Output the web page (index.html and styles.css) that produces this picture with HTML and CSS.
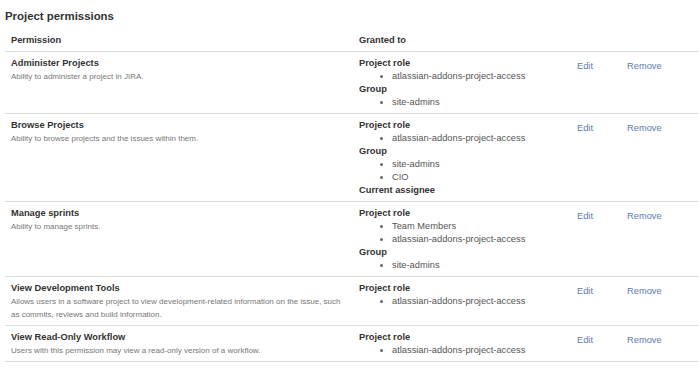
FILE: index.html
```html
<!DOCTYPE html>
<html lang="en">
<head>
    <meta charset="UTF-8">
    <title>Project permissions</title>
    <link rel="stylesheet" href="styles.css">
</head>
<body>
    <div class="page">
        <h2 class="page-title">Project permissions</h2>

        <div class="perm-table">
            <div class="perm-row perm-head">
                <div class="cell">Permission</div>
                <div class="cell">Granted to</div>
                <div class="cell"></div>
                <div class="cell"></div>
            </div>

            <div class="perm-row">
                <div class="cell perm-info">
                    <div class="perm-name">Administer Projects</div>
                    <div class="perm-desc">Ability to administer a project in JIRA.</div>
                </div>
                <div class="cell grants">
                    <div class="grant-type">Project role</div>
                    <ul>
                        <li>atlassian-addons-project-access</li>
                    </ul>
                    <div class="grant-type">Group</div>
                    <ul>
                        <li>site-admins</li>
                    </ul>
                </div>
                <div class="cell action"><a href="#">Edit</a></div>
                <div class="cell action"><a href="#">Remove</a></div>
            </div>

            <div class="perm-row">
                <div class="cell perm-info">
                    <div class="perm-name">Browse Projects</div>
                    <div class="perm-desc">Ability to browse projects and the issues within them.</div>
                </div>
                <div class="cell grants">
                    <div class="grant-type">Project role</div>
                    <ul>
                        <li>atlassian-addons-project-access</li>
                    </ul>
                    <div class="grant-type">Group</div>
                    <ul>
                        <li>site-admins</li>
                        <li>CIO</li>
                    </ul>
                    <div class="grant-type">Current assignee</div>
                </div>
                <div class="cell action"><a href="#">Edit</a></div>
                <div class="cell action"><a href="#">Remove</a></div>
            </div>

            <div class="perm-row">
                <div class="cell perm-info">
                    <div class="perm-name">Manage sprints</div>
                    <div class="perm-desc">Ability to manage sprints.</div>
                </div>
                <div class="cell grants">
                    <div class="grant-type">Project role</div>
                    <ul>
                        <li>Team Members</li>
                        <li>atlassian-addons-project-access</li>
                    </ul>
                    <div class="grant-type">Group</div>
                    <ul>
                        <li>site-admins</li>
                    </ul>
                </div>
                <div class="cell action"><a href="#">Edit</a></div>
                <div class="cell action"><a href="#">Remove</a></div>
            </div>

            <div class="perm-row">
                <div class="cell perm-info">
                    <div class="perm-name">View Development Tools</div>
                    <div class="perm-desc">Allows users in a software project to view development-related information on the issue, such as commits, reviews and build information.</div>
                </div>
                <div class="cell grants">
                    <div class="grant-type">Project role</div>
                    <ul>
                        <li>atlassian-addons-project-access</li>
                    </ul>
                </div>
                <div class="cell action"><a href="#">Edit</a></div>
                <div class="cell action"><a href="#">Remove</a></div>
            </div>

            <div class="perm-row">
                <div class="cell perm-info">
                    <div class="perm-name">View Read-Only Workflow</div>
                    <div class="perm-desc">Users with this permission may view a read-only version of a workflow.</div>
                </div>
                <div class="cell grants">
                    <div class="grant-type">Project role</div>
                    <ul>
                        <li>atlassian-addons-project-access</li>
                    </ul>
                </div>
                <div class="cell action"><a href="#">Edit</a></div>
                <div class="cell action"><a href="#">Remove</a></div>
            </div>
        </div>
    </div>
</body>
</html>
```

FILE: styles.css
```css
* {
    margin: 0;
    padding: 0;
    box-sizing: border-box;
}

body {
    font-family: "Liberation Sans", Arial, sans-serif;
    background: #fff;
    color: #333;
}

.page {
    padding: 9px 0 0 5px;
}

.page-title {
    font-size: 11.4px;
    font-weight: bold;
    line-height: 14px;
    color: #333;
    margin-bottom: 6px;
}

.perm-row {
    display: grid;
    grid-template-columns: 348px 218px 50px 1fr;
    border-bottom: 1px solid #dedede;
    padding: 5px 0 4px;
}

.cell {
    padding-left: 6px;
    font-size: 9.3px;
    line-height: 13px;
}

.perm-head .cell {
    font-weight: bold;
    color: #333;
}

.perm-info {
    padding-right: 12px;
}

.perm-name {
    font-weight: bold;
    color: #333;
}

.perm-desc {
    font-size: 8px;
    color: #777;
}

.grant-type {
    font-weight: bold;
    color: #333;
}

.grants ul {
    padding-left: 33px;
    color: #555;
}

.grants li::marker {
    color: #666;
}

.action {
    padding-top: 3px;
}

.action a {
    color: #5a7bad;
    text-decoration: none;
}
```
